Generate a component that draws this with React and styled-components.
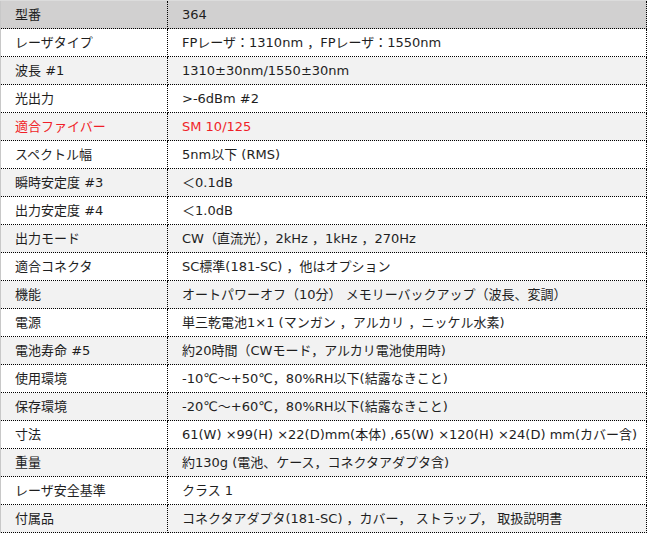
import React from "react";
import styled, { createGlobalStyle } from "styled-components";

const GlobalStyle = createGlobalStyle`
  html, body {
    margin: 0;
    padding: 0;
    background: #fff;
  }
  body {
    font-family: "DejaVu Sans", "Noto Sans CJK JP", sans-serif;
  }
`;

const SpecTable = styled.table`
  width: 647px;
  border-collapse: collapse;
  table-layout: fixed;
  border-top: 1px solid #dcdcdc;
  border-left: 1px solid #c8c8c8;
  font-size: 13px;
  color: #222;
`;

const Row = styled.tr`
  height: 27px;
  background-color: ${props =>
    props.$head ? "#d1d0d0" : props.$shade ? "#f2f2f2" : "#fff"};
  color: ${props => (props.$alert ? "#f01e28" : "#1e1e1e")};
`;

const LabelCell = styled.td`
  width: 152px;
  padding: 0 0 0 14px;
  border-bottom: 1px dotted #000;
  border-right: 1px dotted #000;
  white-space: nowrap;
  line-height: 27px;
  vertical-align: middle;
`;

const ValueCell = styled.td`
  padding: 0 0 0 14px;
  border-bottom: 1px dotted #000;
  border-right: 1px dotted #000;
  white-space: nowrap;
  line-height: 27px;
  vertical-align: middle;
`;

const specs = [
  ["型番", "364"],
  ["レーザタイプ", "FPレーザ：1310nm ，FPレーザ：1550nm"],
  ["波長 #1", "1310±30nm/1550±30nm"],
  ["光出力", ">-6dBm #2"],
  ["適合ファイバー", "SM 10/125", true],
  ["スペクトル幅", "5nm以下 (RMS)"],
  ["瞬時安定度 #3", "＜0.1dB"],
  ["出力安定度 #4", "＜1.0dB"],
  ["出力モード", "CW（直流光），2kHz ，1kHz ，270Hz"],
  ["適合コネクタ", "SC標準(181-SC) ，他はオプション"],
  ["機能", "オートパワーオフ（10分） メモリーバックアップ（波長、変調）"],
  ["電源", "単三乾電池1×1 (マンガン ，アルカリ ，ニッケル水素)"],
  ["電池寿命 #5", "約20時間（CWモード，アルカリ電池使用時)"],
  ["使用環境", "-10℃～+50℃，80%RH以下(結露なきこと)"],
  ["保存環境", "-20℃～+60℃，80%RH以下(結露なきこと)"],
  ["寸法", "61(W) ×99(H) ×22(D)mm(本体) ,65(W) ×120(H) ×24(D) mm(カバー含)"],
  ["重量", "約130g (電池、ケース，コネクタアダプタ含)"],
  ["レーザ安全基準", "クラス 1"],
  ["付属品", "コネクタアダプタ(181-SC) ，カバー， ストラップ， 取扱説明書"],
];

export default function App() {
  return (
    <>
      <GlobalStyle />
      <SpecTable>
        <tbody>
          {specs.map(([label, value, alert], i) => (
            <Row key={label} $head={i === 0} $shade={i % 2 === 0} $alert={alert}>
              <LabelCell>{label}</LabelCell>
              <ValueCell>{value}</ValueCell>
            </Row>
          ))}
        </tbody>
      </SpecTable>
    </>
  );
}
